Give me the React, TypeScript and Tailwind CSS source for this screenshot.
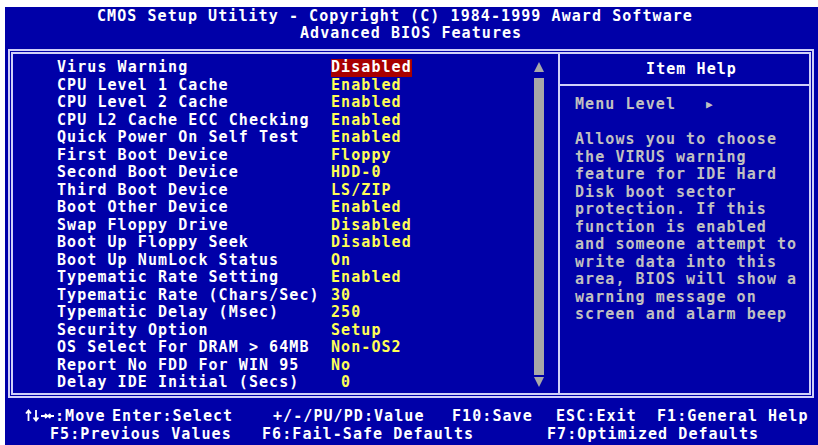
import React from 'react';

const rows: [string, string][] = [
  ['Virus Warning', 'Disabled'],
  ['CPU Level 1 Cache', 'Enabled'],
  ['CPU Level 2 Cache', 'Enabled'],
  ['CPU L2 Cache ECC Checking', 'Enabled'],
  ['Quick Power On Self Test', 'Enabled'],
  ['First Boot Device', 'Floppy'],
  ['Second Boot Device', 'HDD-0'],
  ['Third Boot Device', 'LS/ZIP'],
  ['Boot Other Device', 'Enabled'],
  ['Swap Floppy Drive', 'Disabled'],
  ['Boot Up Floppy Seek', 'Disabled'],
  ['Boot Up NumLock Status', 'On'],
  ['Typematic Rate Setting', 'Enabled'],
  ['Typematic Rate (Chars/Sec)', '30'],
  ['Typematic Delay (Msec)', '250'],
  ['Security Option', 'Setup'],
  ['OS Select For DRAM > 64MB', 'Non-OS2'],
  ['Report No FDD For WIN 95', 'No'],
  ['Delay IDE Initial (Secs)', ' 0'],
];

const help = [
  'Allows you to choose',
  'the VIRUS warning',
  'feature for IDE Hard',
  'Disk boot sector',
  'protection. If this',
  'function is enabled',
  'and someone attempt to',
  'write data into this',
  'area, BIOS will show a',
  'warning message on',
  'screen and alarm beep',
];

function Arrow({ down }: { down?: boolean }) {
  return (
    <svg width="10" height="10" viewBox="0 0 10 10" className="block">
      <polygon points={down ? '0,0 10,0 5,10' : '5,0 10,10 0,10'} fill="#a8a8a8" />
    </svg>
  );
}

// the four cursor keys drawn small, like the BIOS glyphs
function Keys() {
  return (
    <svg width="30" height="13" viewBox="0 0 30 13" className="inline-block align-[-1px]">
      <g stroke="#fff" strokeWidth="1.8" fill="none">
        <path d="M3.5 12V2M1 4.5L3.5 1.5L6 4.5" />
        <path d="M11 1V11M8.5 8.5L11 11.5L13.5 8.5" />
        <path d="M16 7H22M20 5L22.5 7L20 9" />
        <path d="M29 7H23.5M25.5 5L23 7L25.5 9" />
      </g>
    </svg>
  );
}

export default function App() {
  return (
    <div className="w-[818px] h-[445px] bg-white overflow-hidden">
      <div className="ml-[5px] mt-[7px] w-[813px] h-[438px] bg-[#0000a8] text-white font-['DejaVu_Sans_Mono',monospace] font-bold text-[15px] tracking-[1.07px] leading-[17.5px] whitespace-pre">
        {/* title */}
        <div className="h-[17.5px] pl-[92px] pt-[1px]">CMOS Setup Utility - Copyright (C) 1984-1999 Award Software</div>
        <div className="h-[17.5px] pl-[295px]">Advanced BIOS Features</div>

        {/* double frame */}
        <div className="ml-[3px] mt-[7px] w-[806px] h-[349px] border-2 border-[#d0d0f8] p-[1px]">
          <div className="h-full border-2 border-[#d0d0f8] flex">
            <div className="w-[547px] border-r-2 border-[#d0d0f8] flex">
              <div className="flex-1 pl-[44px] pt-[5px]">
                {rows.map(([label, value], i) => (
                  <div key={label} className="h-[17.5px] flex">
                    <span className="w-[274px]">{label}</span>
                    {i === 0 ? (
                      <span className="bg-[#a80000] text-white">{value}</span>
                    ) : (
                      <span className="text-[#ffff55]">{value}</span>
                    )}
                  </div>
                ))}
              </div>
              <div className="w-[10px] mr-[14px] pt-[8px] flex flex-col">
                <Arrow />
                <div className="mt-[6px] h-[297px] bg-[#a8a8a8]" />
                <div className="mt-[2px]">
                  <Arrow down />
                </div>
              </div>
            </div>

            <div className="flex-1 flex flex-col">
              <div className="h-[32px] border-b-2 border-[#d0d0f8] flex items-center justify-center pl-[14px] pt-[2px]">
                Item Help
              </div>
              <div className="pl-[15px] pt-[10px] text-[#c0c0c0]">
                <div className="h-[17.5px] flex items-center">
                  <span>Menu Level</span>
                  <span className="ml-[30px] text-[11px]">▶</span>
                </div>
                <div className="h-[17.5px]" />
                {help.map((line) => (
                  <div key={line} className="h-[17.5px]">{line}</div>
                ))}
              </div>
            </div>
          </div>
        </div>

        {/* key legend */}
        <div className="mt-[10px] h-[17.5px] flex pl-[20px]">
          <span className="w-[87px] shrink-0">
            <Keys />:Move
          </span>
          <span className="w-[161px] shrink-0">Enter:Select</span>
          <span className="w-[179px] shrink-0">+/-/PU/PD:Value</span>
          <span className="w-[104px] shrink-0">F10:Save</span>
          <span className="w-[101px] shrink-0">ESC:Exit</span>
          <span>F1:General Help</span>
        </div>
        <div className="h-[17.5px] flex pl-[45px]">
          <span className="w-[212px] shrink-0">F5:Previous Values</span>
          <span className="w-[285px] shrink-0">F6:Fail-Safe Defaults</span>
          <span>F7:Optimized Defaults</span>
        </div>
      </div>
    </div>
  );
}
